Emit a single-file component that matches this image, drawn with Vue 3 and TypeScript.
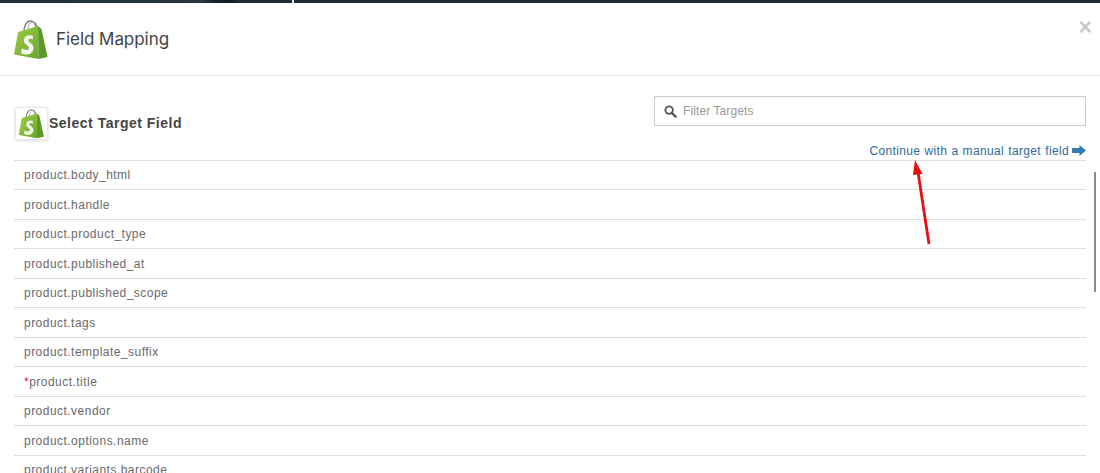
<script setup lang="ts">
const targets = [
  { name: 'product.body_html' },
  { name: 'product.handle' },
  { name: 'product.product_type' },
  { name: 'product.published_at' },
  { name: 'product.published_scope' },
  { name: 'product.tags' },
  { name: 'product.template_suffix' },
  { name: 'product.title', required: true },
  { name: 'product.vendor' },
  { name: 'product.options.name' },
  { name: 'product.variants.barcode' },
]
</script>

<template>
  <div class="page">
    <div class="topbar"></div>
    <header class="head">
      <svg class="logo big" viewBox="0 0 36 40">
        <use href="#bag" />
      </svg>
      <h1>Field Mapping</h1>
      <span class="close">×</span>
    </header>
    <svg width="0" height="0" class="defs">
      <defs>
        <linearGradient id="g1" x1="0" y1="0" x2="1" y2="1">
          <stop offset="0" stop-color="#a0cc48" />
          <stop offset="1" stop-color="#69a82c" />
        </linearGradient>
        <g id="bag">
          <path d="M11 11c0-5 3-10 6-10 4 0 6 3 6.500 9" fill="none" stroke="#77808a" stroke-width="1.500" />
          <path d="M15 9c0-4 2-7 5-7 3 0 4.500 3 5 8" fill="none" stroke="#a0a7ae" stroke-width="1.100" />
          <path d="M1 34.500 5 12 25 6 25.500 39Z" fill="url(#g1)" />
          <path d="M25 6 28.500 9 34.500 37 25.500 39Z" fill="#5b9a28" />
          <path transform="translate(-3.500 -2.500) scale(1.200)" d="M19.500 15.500c-1.500-.9-6.500-1.500-7.500 3-.8 4 5 4.500 4 7.500-.7 1.800-3.500 1.200-5.500-.3l-1 4c3 2 9.500 2 10.500-3.500.8-5-4.800-5-4.300-7.500.3-1.300 2.300-1.200 3.800-.4Z" fill="#f1f5ea" />
        </g>
      </defs>
    </svg>
    <main class="content">
      <div class="tools">
        <div class="heading">
          <span class="tile">
            <svg class="logo small" viewBox="0 0 36 40"><use href="#bag" /></svg>
          </span>
          <h2>Select Target Field</h2>
        </div>
        <div class="side">
          <label class="search">
            <svg class="glass" viewBox="0 0 14 14">
              <circle cx="5.500" cy="5.500" r="4" fill="none" stroke="#555" stroke-width="2" />
              <path d="M8.500 8.500 12.500 12.500" stroke="#555" stroke-width="2.400" stroke-linecap="round" />
            </svg>
            <input placeholder="Filter Targets" />
          </label>
          <a class="manual">Continue with a manual target field
            <svg class="next" viewBox="0 0 14 11">
              <path d="M0 3H7.500V0L14 5.500 7.500 11V8H0Z" fill="#337ab7" />
            </svg>
          </a>
        </div>
      </div>
      <ul class="list">
        <li v-for="t in targets" :key="t.name"><span v-if="t.required" class="req">*</span>{{ t.name }}</li>
      </ul>
    </main>
    <div class="scrollbar"></div>
    <svg class="annot" viewBox="0 0 1100 473">
      <path d="M929 244 918 172" stroke="#e81010" stroke-width="2.800" fill="none" />
      <path d="M915 160 922.500 174 913 175Z" fill="#e81010" />
    </svg>
  </div>
</template>

<style scoped>
.page {
  position: relative;
  width: 1100px;
  height: 473px;
  overflow: hidden;
  background: #fff;
  font-family: "Liberation Sans", Arial, sans-serif;
}
.defs { position: absolute; }
.topbar {
  height: 3px;
  background: linear-gradient(90deg, #1d3038 0, #25393f 200px, #14262c 215px, #0d1e25 230px, #1b2c3a 240px, #1b2c3a 292px, #e8e8e8 292px, #e8e8e8 294px, #1b2c3a 294px, #1b2c3a 100%);
}
.head {
  position: relative;
  box-sizing: border-box;
  height: 73px;
  border-bottom: 1px solid #e5e5e5;
  display: flex;
  align-items: flex-start;
  padding: 17px 0 0 13px;
}
.logo.big { width: 36px; height: 40px; flex: none; }
h1 {
  margin: 7px 0 0 7px;
  font: 400 17px/24px Inter, "Liberation Sans", sans-serif;
  letter-spacing: -.05px;
  color: #444;
}
.close {
  position: absolute;
  right: 8px;
  top: 14px;
  font: 700 23px/21px "Liberation Sans", sans-serif;
  color: #c9c9c9;
}
.content { padding: 20px 14px 0; }
.tools {
  display: flex;
  justify-content: space-between;
}
.heading { display: flex; align-items: center; height: 54px; align-self: flex-start; }
.tile {
  box-sizing: border-box;
  width: 33px;
  height: 33px;
  margin: 1px 0 0 1px;
  border: 1px solid #e8e8e8;
  border-radius: 3px;
  box-shadow: 0 1px 3px rgba(0,0,0,.15);
  display: flex;
  align-items: center;
  justify-content: center;
}
.logo.small { width: 27px; height: 30px; }
h2 {
  margin: 0 0 0 1px;
  font: 700 14px/20px "Liberation Sans", sans-serif;
  letter-spacing: .5px;
  color: #444;
}
.side {
  width: 432px;
  display: flex;
  flex-direction: column;
  align-items: flex-end;
}
.search {
  box-sizing: border-box;
  width: 100%;
  height: 30px;
  border: 1px solid #ccc;
  display: flex;
  align-items: center;
  padding-left: 9px;
}
.glass { width: 13px; height: 13px; flex: none; }
input {
  border: 0;
  outline: 0;
  flex: 1;
  margin-left: 6px;
  padding: 0;
  font: 12px "Liberation Sans", sans-serif;
  letter-spacing: .1px;
  background: transparent;
}
input::placeholder { color: #999; opacity: 1; }
.manual {
  margin-top: 16.500px;
  height: 17px;
  font-size: 12px;
  line-height: 17px;
  letter-spacing: .35px;
  word-spacing: .5px;
  color: #2f6a9c;
  display: flex;
  align-items: center;
  gap: 3px;
  white-space: nowrap;
}
.next { width: 14px; height: 11px; margin-bottom: 2px; }
.list {
  list-style: none;
  margin: 0;
  padding: 0;
  border-top: 1px solid #ddd;
}
li {
  box-sizing: border-box;
  height: 29.500px;
  border-bottom: 1px solid #ddd;
  padding: .5px 10px 0;
  font-size: 12px;
  line-height: 28px;
  letter-spacing: .47px;
  color: #6a6a6a;
}
.req { color: #c7254e; }
.scrollbar {
  position: absolute;
  left: 1094px;
  top: 172px;
  width: 2px;
  height: 120px;
  background: #8a8a8a;
}
.annot {
  position: absolute;
  inset: 0;
  width: 1100px;
  height: 473px;
  pointer-events: none;
}
</style>
